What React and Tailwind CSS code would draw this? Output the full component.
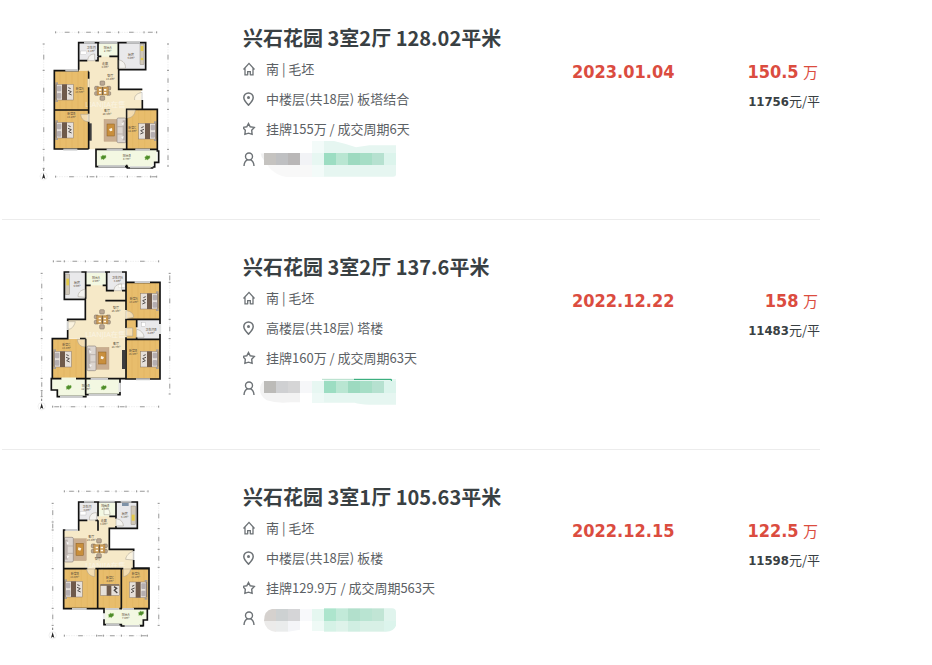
import React from "react";

/* ---------- floor plan pieces ---------- */

const WOOD = "#e8bd6c";
const TILE = "#f6e9c8";
const GREY = "#e9e9eb";
const PALE = "#f3f8e2";

function Floor({ d, fill }) {
  return <path d={d} fill={fill} />;
}

function Bed({ x, y, flip }) {
  return (
    <g transform={flip ? `translate(${x + 54} ${y}) scale(-1 1)` : `translate(${x} ${y})`}>
      <rect width="9" height="46" fill="#8d8078" />
      <rect x="4" y="0" width="50" height="47" fill="#e6e0da" stroke="#8a7a6c" strokeWidth="1.5" />
      <rect x="5" y="4" width="13" height="17" rx="3" fill="#b5aeb0" />
      <rect x="5" y="26" width="13" height="17" rx="3" fill="#b5aeb0" />
      <rect x="20" y="0" width="15" height="47" fill="#6f5a4b" />
      <path d="M38 18l10 4-8 6 9 4M39 10l7 3" stroke="#55504e" strokeWidth="3" fill="none" />
      <rect x="0" y="-6" width="8" height="6" fill="#a79c90" />
      <rect x="0" y="47" width="8" height="6" fill="#a79c90" />
    </g>
  );
}

function Sofa({ x, y, flip }) {
  return (
    <g transform={flip ? `translate(${x + 66} ${y}) scale(-1 1)` : `translate(${x} ${y})`}>
      <rect x="24" y="4" width="42" height="66" fill="#c9ad90" stroke="#b59878" />
      <rect x="0" y="0" width="27" height="74" rx="4" fill="#dcd5d0" stroke="#8f8580" strokeWidth="2" />
      <rect x="2" y="7" width="8" height="60" fill="#b9b0ab" />
      <path d="M10 26h16M10 48h16" stroke="#9c928d" strokeWidth="1.5" />
      <path d="M6 12l8 5-6 6zM7 54l8 3-6 7z" fill="#f7f5f3" />
      <rect x="35" y="18" width="22" height="36" fill="#c98f3d" stroke="#8b5f24" strokeWidth="1.5" />
      <path d="M42 30l9 3-3 7-7-2z" fill="#fbf4e4" />
    </g>
  );
}

function DiningTable({ x, y }) {
  return (
    <g transform={`translate(${x} ${y})`}>
      <g fill="#b9a793" stroke="#77695c" strokeWidth="1.5">
        <rect x="-8" y="-29" width="14" height="13" rx="3" />
        <rect x="-8" y="16" width="14" height="13" rx="3" />
        <rect x="-24" y="-13" width="12" height="11" rx="3" />
        <rect x="-24" y="3" width="12" height="11" rx="3" />
        <rect x="12" y="-13" width="12" height="11" rx="3" />
        <rect x="12" y="3" width="12" height="11" rx="3" />
      </g>
      <rect x="-17" y="-11" width="34" height="24" fill="#c99a55" stroke="#9a6e31" />
      <path d="M-11-5h7v5h-7zM4-5h7v5h-7zM-11 4h7v5h-7zM4 4h7v5h-7z" fill="#fff8ea" />
      <path d="M0-11v24" stroke="#6b5947" strokeWidth="3" />
    </g>
  );
}

function Plant({ x, y }) {
  return (
    <path
      transform={`translate(${x} ${y})`}
      d="M-8-2l5-2 1-3 4 2 5-1 1 4-1 4-4 2-2 3-3-2-5 1 1-4z"
      fill="#4f8c2a"
      stroke="#79b34f"
      strokeWidth="1"
    />
  );
}

function RoomLabel({ x, y, name, area }) {
  return (
    <g
      fill="#5b4e3b"
      fontSize="9"
      textAnchor="middle"
      fontFamily="'Noto Sans CJK SC', sans-serif"
      aria-hidden="true"
    >
      <text x={x} y={y}>{name}</text>
      {area && <text x={x} y={y + 9} fontSize="8">{area}</text>}
    </g>
  );
}

function Door({ d }) {
  return <path d={d} fill="#fffdf6" fillOpacity="0.5" stroke="#a39d90" strokeWidth="1.5" />;
}

function HWindow({ x, y, w }) {
  return (
    <g>
      <rect x={x} y={y - 3} width={w} height="6" fill="#d9dadb" />
      <path d={`M${x} ${y}h${w}`} stroke="#858788" strokeWidth="1" />
    </g>
  );
}

/* Dotted dimension line with tick marks and faded figures */
function Ruler({ vertical, at, stops }) {
  const from = stops[0];
  const to = stops[stops.length - 1];
  const line = vertical ? `M${at} ${from}V${to}` : `M${from} ${at}H${to}`;
  return (
    <g>
      <path d={line} stroke="#cfcfcf" strokeWidth="1.5" strokeDasharray="2 3" />
      {stops.map((s) => (
        <path
          key={s}
          d={vertical ? `M${at - 3} ${s}h6` : `M${s} ${at - 3}v6`}
          stroke="#8f8f8f"
          strokeWidth="3"
        />
      ))}
      {stops.slice(1).map((s, i) => {
        const mid = (s + stops[i]) / 2;
        return (
          <path
            key={s}
            d={vertical ? `M${at} ${mid - 7}v14` : `M${mid - 7} ${at}h14`}
            stroke="#b3b3b3"
            strokeWidth="4"
          />
        );
      })}
    </g>
  );
}

function Compass({ x, y }) {
  return (
    <g transform={`translate(${x} ${y})`}>
      <circle r="11" fill="#fff" stroke="#d2d2d2" />
      <path d="M0-10L5 8 0 4-5 8z" fill="#222" />
      <path d="M0-23v7" stroke="#777" strokeWidth="3" />
    </g>
  );
}

function Watermark({ x, y }) {
  return (
    <text
      x={x}
      y={y}
      fontSize="22"
      fill="#fff"
      fillOpacity="0.5"
      textAnchor="middle"
      fontFamily="'Noto Sans', 'Noto Sans CJK SC', sans-serif"
      aria-hidden="true"
    >
      LIANJIA在售
    </text>
  );
}

function PlanFrame({ box, children }) {
  return (
    <svg viewBox={box} className="h-[170px] w-[150px] shrink-0" role="img" aria-label="户型图" fill="none">
      {children}
    </svg>
  );
}

function PlanA() {
  return (
    <PlanFrame box="0 3 450 510">
      <Ruler at={37} stops={[77, 146, 205, 266, 342, 380]} />
      <Ruler at={470} stops={[77, 172, 200, 292, 362, 380]} />
      <Ruler vertical at={41} stops={[72, 151, 270, 388, 445]} />
      <Ruler vertical at={414} stops={[72, 151, 212, 268, 388, 438]} />
      <Floor d="M146 68H266V208H337V268H290V388H176V152H146z" fill={TILE} />
      <Floor d="M146 68h58v54h-58z" fill={GREY} />
      <Floor d="M204 68h61v42h-61z" fill={PALE} />
      <Floor d="M265 68h80v80h-80z" fill={GREY} />
      <Floor d="M73 152H176V387H73zM290 268H382V388H290z" fill={WOOD} />
      <Floor d="M198 390H380V430H368V440H198z" fill={PALE} />
      <path d="M90 154v232M108 154v232M126 154v232M144 154v232M162 154v232M308 270v116M326 270v116M344 270v116M362 270v116" stroke="#dcae58" strokeWidth="1" />
      <rect x="330" y="72" width="12" height="62" fill="#cfc7b8" stroke="#7a746a" />
      <rect x="332" y="78" width="8" height="15" fill="#e3ca49" />
      <circle cx="336" cy="117" r="4" fill="#e3ca49" />
      <rect x="152" y="93" width="18" height="11" fill="#fff" stroke="#aaa" />
      <rect x="177" y="310" width="8" height="52" fill="#3d3d3f" />
      <DiningTable x={218} y={212} />
      <Bed x={76} y={193} />
      <Bed x={76} y={307} />
      <Bed x={326} y={310} flip />
      <Sofa x={222} y={294} flip />
      <Plant x={220} y={412} />
      <Plant x={352} y={413} />
      <Watermark x={226} y={260} />
      <path
        d="M146 149V68H347V149H266V208H337M337 240V268H382V390H380M265 68V148M204 68V109M204 109H214M238 109H265M149 122H172M196 122H204V110M146 152H73V387H176M176 152V387M73 270H176M290 388V268H337M290 388H382V393H386V427H374V441H368M290 388H198V440H292V444H370M290 434v10"
        stroke="#121212"
        strokeWidth="5"
      />
      <path d="M176 176v26M176 281v24M176 152h24" stroke={TILE} strokeWidth="7" />
      <HWindow x={162} y={68} w={32} />
      <HWindow x={208} y={68} w={54} />
      <HWindow x={290} y={68} w={40} />
      <HWindow x={106} y={151} w={38} />
      <HWindow x={100} y={389} w={42} />
      <HWindow x={205} y={439} w={80} />
      <HWindow x={300} y={442} w={62} />
      <HWindow x={230} y={389} w={48} />
      <HWindow x={316} y={389} w={44} />
      <path d="M337 213v27" stroke="#fff" strokeWidth="8" />
      <Door d="M336 240V217C320 220 312 228 314 240" />
      <Door d="M173 122C174 108 182 102 194 102V122z" />
      <Door d="M267 145V120C280 122 288 132 286 145z" />
      <Door d="M176 283H152C154 300 166 306 176 304z" />
      <Door d="M292 270H316C314 288 302 294 292 294z" />
      <RoomLabel x={184} y={87} name="卫生间" area="4.1m²" />
      <RoomLabel x={233} y={88} name="阳台A" area="2.7m²" />
      <RoomLabel x={303} y={107} name="厨房" area="6.0m²" />
      <RoomLabel x={225} y={134} name="走廊" area="4.3m²" />
      <RoomLabel x={241} y={170} name="餐厅" area="13.8m²" />
      <RoomLabel x={149} y={209} name="卧室A" area="13.6m²" />
      <RoomLabel x={124} y={284} name="卧室B" area="14.2m²" />
      <RoomLabel x={231} y={277} name="客厅" area="20.3m²" />
      <RoomLabel x={307} y={326} name="卧室C" area="12.8m²" />
      <RoomLabel x={290} y={412} name="阳台B" area="8.7m²" />
      <Compass x={41} y={469} />
    </PlanFrame>
  );
}

function PlanB() {
  return (
    <PlanFrame box="0 0 450 510">
      <Ruler at={34} stops={[70, 103, 166, 230, 288, 386]} />
      <Ruler at={470} stops={[68, 92, 166, 265, 288, 386]} />
      <Ruler vertical at={35} stops={[70, 146, 208, 266, 385, 422, 440]} />
      <Ruler vertical at={419} stops={[70, 97, 208, 266, 385, 432]} />
      <Floor d="M167 66H288V208H320V266H288V386H167V266H113V208H167z" fill={TILE} />
      <Floor d="M103 66h64v79h-64z" fill={GREY} />
      <Floor d="M167 66h63v40h-63z" fill={PALE} />
      <Floor d="M230 66h58v56h-58z" fill={GREY} />
      <Floor d="M288 97H390V208H288zM288 267H390V387H288zM67 267H167V386H67z" fill={WOOD} />
      <Floor d="M288 209h32v57h-32z" fill={WOOD} />
      <Floor d="M320 209h70v57h-70z" fill={GREY} />
      <Floor d="M67 387H270V434H170V440H80V420H67z" fill={PALE} />
      <path d="M306 98v110M324 98v110M342 98v110M360 98v110M376 98v110M306 268v118M324 268v118M342 268v118M360 268v118M376 268v118M84 269v116M102 269v116M120 269v116M138 269v116M154 269v116" stroke="#dcae58" strokeWidth="1" />
      <rect x="107" y="72" width="12" height="62" fill="#cfc7b8" stroke="#7a746a" />
      <rect x="109" y="86" width="8" height="20" fill="#e3ca49" />
      <rect x="265" y="102" width="20" height="11" fill="#fff" stroke="#aaa" />
      <rect x="335" y="217" width="12" height="12" fill="#fff" stroke="#aaa" />
      <rect x="276" y="300" width="9" height="57" fill="#3d3d3f" />
      <DiningTable x={217} y={208} />
      <Bed x={332} y={130} flip />
      <Bed x={332} y={304} flip />
      <Bed x={70} y={304} />
      <Sofa x={171} y={288} />
      <Plant x={116} y={412} />
      <Plant x={221} y={413} />
      <Watermark x={226} y={260} />
      <path
        d="M166 148H103V66H288V97H390V387H288V66M167 66V146M167 106H182M218 106H230V66M230 106V122H252M276 122H288M166 145V208H113V214M113 240V266H67V386H64V420H82V440H170M226 152H288M288 208H390M320 208V232M320 262V268M288 268H390M167 266V434M167 386H288M150 266H167M67 386H96M138 386H167M165 434H270V387"
        stroke="#121212"
        strokeWidth="5"
      />
      <path d="M288 180v26M288 234v28" stroke={TILE} strokeWidth="7" />
      <path d="M94 386h44" stroke={PALE} strokeWidth="7" />
      <HWindow x={118} y={66} w={36} />
      <HWindow x={170} y={66} w={55} />
      <HWindow x={240} y={66} w={36} />
      <HWindow x={314} y={96} w={46} />
      <HWindow x={318} y={388} w={42} />
      <HWindow x={90} y={441} w={68} />
      <HWindow x={176} y={435} w={86} />
      <HWindow x={182} y={387} w={52} />
      <path d="M390 222v30M113 215v25M269 398v28" stroke="#e2e3e3" strokeWidth="7" />
      <Door d="M114 215H136C132 230 124 238 114 238z" />
      <Door d="M165 142V118C150 120 144 130 144 140z" />
      <Door d="M252 122C252 108 262 102 275 102V122z" />
      <Door d="M288 206V182C304 184 312 192 310 202z" />
      <Door d="M288 234H308V258H288z" />
      <Door d="M320 238C332 240 342 250 342 262H320z" />
      <Door d="M142 268C144 284 154 292 165 290V268z" />
      <RoomLabel x={141} y={101} name="厨房" area="5.6m²" />
      <RoomLabel x={198} y={87} name="阳台A" area="2.5m²" />
      <RoomLabel x={262} y={87} name="卫生间A" area="3.8m²" />
      <RoomLabel x={258} y={176} name="餐厅" area="25.4m²" />
      <RoomLabel x={311} y={150} name="卧室A" area="13.2m²" />
      <RoomLabel x={363} y={244} name="卫生间B" area="4.2m²" />
      <RoomLabel x={258} y={284} name="客厅" area="24.7m²" />
      <RoomLabel x={109} y={287} name="卧室C" area="13.0m²" />
      <RoomLabel x={309} y={305} name="卧室B" area="15.4m²" />
      <RoomLabel x={167} y={411} name="阳台B" area="12.9m²" />
      <Compass x={35} y={469} />
    </PlanFrame>
  );
}

function PlanC() {
  return (
    <PlanFrame box="0 0 450 510">
      <Ruler at={34} stops={[103, 146, 204, 258, 320, 354]} />
      <Ruler at={467} stops={[103, 200, 220, 274, 334, 352]} />
      <Ruler vertical at={68} stops={[70, 126, 150, 266, 385, 436]} />
      <Ruler vertical at={386} stops={[70, 146, 208, 262, 385, 436]} />
      <Floor d="M146 66H258V146H238V208H310V266H102V152H146z" fill={TILE} />
      <Floor d="M146 66h57v55h-57z" fill={GREY} />
      <Floor d="M204 66h54v43h-54z" fill={PALE} />
      <Floor d="M258 66h64v79h-64z" fill={GREY} />
      <Floor d="M101 266H356V386H101z" fill={WOOD} />
      <Floor d="M221 387H352V420H338V436H272V432H221z" fill={PALE} />
      <path d="M118 268v116M136 268v116M154 268v116M172 268v116M190 268v116M220 268v116M238 268v116M256 268v116M290 268v116M308 268v116M326 268v116M342 268v116" stroke="#dcae58" strokeWidth="1" />
      <rect x="303" y="78" width="14" height="56" fill="#cfc7b8" stroke="#7a746a" />
      <rect x="305" y="104" width="9" height="18" fill="#e3ca49" />
      <rect x="276" y="69" width="20" height="9" fill="#7f93a8" />
      <rect x="150" y="94" width="18" height="11" fill="#fff" stroke="#aaa" />
      <DiningTable x={208} y={205} />
      <Bed x={103} y={304} />
      <Bed x={298} y={306} flip />
      <g>
        <rect x="211" y="317" width="58" height="30" fill="#e6e0da" stroke="#877565" strokeWidth="1.5" />
        <rect x="230" y="315" width="14" height="32" fill="#6f5a4b" />
        <path d="M252 320l8 5-7 6 9 8" stroke="#494443" strokeWidth="4" />
        <rect x="211" y="312" width="57" height="5" fill="#8a7968" />
      </g>
      <Sofa x={103} y={172} />
      <Plant x={243} y={406} />
      <Plant x={333} y={400} />
      <Watermark x={226} y={264} />
      <path
        d="M146 152V66H322V145H238V208H311V214M311 240V264H357V386H352V420H340V437H328M204 66V109M238 109H258V66M258 109V116M258 138V146M146 121H172M196 121H204M204 121V152M146 150H101V386H222V434H274V438H340M101 266H172M196 266H280M304 266H357M203 266V386M274 266V386M203 386H222M268 386H276M310 386H357"
        stroke="#121212"
        strokeWidth="5"
      />
      <HWindow x={162} y={65} w={30} />
      <HWindow x={208} y={65} w={46} />
      <HWindow x={272} y={65} w={32} />
      <HWindow x={106} y={150} w={38} />
      <HWindow x={126} y={387} w={44} />
      <HWindow x={226} y={387} w={40} />
      <HWindow x={278} y={387} w={34} />
      <HWindow x={228} y={434} w={40} />
      <HWindow x={284} y={438} w={46} />
      <path d="M311 214v26M222 400v18" stroke="#eceded" strokeWidth="7" />
      <Door d="M310 240V214C296 218 288 228 287 238z" />
      <Door d="M178 120C178 106 184 98 200 98V120z" />
      <Door d="M258 116C274 118 280 128 280 138H258z" />
      <Door d="M170 267C172 282 182 288 194 290V267z" />
      <Door d="M280 290V267H302C300 280 292 288 280 290z" />
      <Door d="M222 76V104H240C240 90 232 80 222 76z" />
      <RoomLabel x={171} y={83} name="卫生间" area="3.8m²" />
      <RoomLabel x={226} y={80} name="阳台B" area="2.3m²" />
      <RoomLabel x={284} y={104} name="厨房" area="5.1m²" />
      <RoomLabel x={221} y={126} name="走廊" area="3.8m²" />
      <RoomLabel x={184} y={173} name="客厅" area="23.0m²" />
      <RoomLabel x={203} y={239} name="餐厅" />
      <RoomLabel x={134} y={284} name="卧室B" area="14.0m²" />
      <RoomLabel x={240} y={298} name="卧室C" area="8.8m²" />
      <RoomLabel x={317} y={286} name="卧室A" area="11.2m²" />
      <RoomLabel x={287} y={409} name="阳台A" area="7.0m²" />
      <Compass x={68} y={466} />
    </PlanFrame>
  );
}

/* ---------- row icons ---------- */

function Icon({ children }) {
  return (
    <svg
      viewBox="0 0 14 14"
      className="size-3.5 shrink-0 text-[#6d7276]"
      fill="none"
      stroke="currentColor"
      strokeWidth="1.3"
      aria-hidden="true"
    >
      {children}
    </svg>
  );
}

const HomeIcon = () => (
  <Icon>
    <path d="M.5 7.500L6 1.400l5.500 6.100M2 6.200v6.600h2.600M10 6.200v6.600H7.400" />
    <path d="M4.700 13.200V9.600h2.600v3.600" />
  </Icon>
);

const PinIcon = () => (
  <Icon>
    <path d="M5.500.9A4.700 4.700 0 0 0 .8 5.600c0 3 2.500 5.400 4.700 7.500 2.200-2.100 4.700-4.500 4.700-7.500A4.700 4.700 0 0 0 5.500.9z" strokeWidth="1.500" />
    <circle cx="5.500" cy="5.600" r="1.500" fill="currentColor" stroke="none" />
  </Icon>
);

const StarIcon = () => (
  <Icon>
    <path d="M5.500 1.500l1.700 3.300 4.100.6-2.600 2.900.4 4-3.600-1.100-3.600 1.100.4-4L-.300 5.400l4.100-.6z" strokeWidth="1.400" />
  </Icon>
);

const PersonIcon = () => (
  <Icon>
    <circle cx="6" cy="4.500" r="3.500" strokeWidth="1.400" />
    <path d="M1 14.500c0-4 1.600-5.700 3.500-6.800M11 14.500c0-4-1.600-5.700-3.500-6.800" strokeWidth="1.400" />
  </Icon>
);

/* ---------- pixelated agent name ---------- */

function Mosaic({ box, top, greys, soft, greens, children }) {
  return (
    <svg viewBox={box} className="h-[30px] w-[130px] shrink-0 overflow-visible" role="img" aria-label="经纪人">
      {children}
      {greys.map((c, i) => (
        <rect key={i} x={102 + i * 36} y={top} width="36" height="36" fill={c} />
      ))}
      {greens.map((c, i) => (
        <rect key={i} x={246 + i * 36} y={top} width="36" height="36" fill={c} />
      ))}
      {soft}
    </svg>
  );
}

const MosaicA = () => (
  <Mosaic
    box="108 387 390 90"
    top={414}
    greys={["#c5c3c0", "#bfc0c2", "#b9b7b7", "#f2f3f6"]}
    greens={["#e7f7f2", "#9cddc2", "#b9e6d2", "#9ddac0", "#a6dec6", "#b6e1d0", "#dcf4ec"]}
  >
    <path d="M282 378h30q35 8 66 19l40-6h80v88q0 6-8 6H282z" fill="#e6f6f1" />
    <path d="M246 378h36v108h-36z" fill="#f3fbf9" />
    <path d="M92 414h154v72h-76q-30-4-52-28z" fill="#f8f8f8" />
    <path d="M92 416h10v20q-8-8-10-20z" fill="#f1f1f1" />
  </Mosaic>
);

const MosaicB = () => (
  <Mosaic
    box="108 384 390 90"
    top={408}
    greys={["#bcbbb8", "#cfd0d2", "#d5d5d6", "#f6f7f9"]}
    greens={["#e7f7f2", "#9cddc2", "#b9e6d2", "#9ddac0", "#a6dec6", "#b6e1d0", "#dcf4ec"]}
  >
    <path d="M246 408h36v66h-36z" fill="#eef9f6" />
    <path d="M282 402h216v77h-80q-30-2-44-6h-92z" fill="#e6f6f1" />
    <path d="M102 408q-12 8-12 26t20 32q30 10 72 6h28v-64z" fill="#f3f3f3" />
    <path d="M276 403h97" stroke="#b5dfcb" strokeWidth="3" />
    <path d="M372 403h112v5" stroke="#1aa168" strokeWidth="3" fill="none" />
  </Mosaic>
);

const MosaicC = () => (
  <Mosaic
    box="108 384 390 90"
    top={402}
    greys={[]}
    greens={[]}
    soft={
      <g>
        <path d="M138 402h-12q-24 4-24 36h36z" fill="#d5d1ce" />
        <rect x="138" y="402" width="36" height="36" fill="#cdd1d2" />
        <rect x="174" y="402" width="36" height="36" fill="#d5d5d7" />
        <path d="M102 438h36v33q-32-4-36-33z" fill="#ecebea" />
        <rect x="138" y="438" width="36" height="32" fill="#eaecec" />
        <path d="M174 438h36v26l-36 6z" fill="#f4f5f8" />
        <rect x="210" y="402" width="36" height="36" fill="#f8f9fb" />
        <path d="M246 402h36v36h-36z" fill="#e5f7f0" />
        <path d="M246 438h36v30h-36z" fill="#effaf6" />
        <path d="M282 400h36v38h-36z" fill="#ade5cd" />
        <path d="M318 400h36v38h-36z" fill="#c2ead9" />
        <path d="M354 400h36v38h-36z" fill="#b2e0cc" />
        <path d="M390 400h36v38h-36z" fill="#b9e4d2" />
        <path d="M426 400h36v38h-36z" fill="#c1e5d5" />
        <path d="M462 400h24q12 0 12 12v26h-36z" fill="#e0f4ed" />
        <path d="M282 438h36v32h-36z" fill="#d5f2e6" />
        <path d="M318 438h36v32h-36z" fill="#def3ea" />
        <path d="M354 438h36v32h-36z" fill="#d0eee2" />
        <path d="M390 438h72v32h-72z" fill="#d8f0e6" />
        <path d="M462 438h36v14q-6 16-30 18h-6z" fill="#dcf4ec" />
      </g>
    }
  />
);

/* ---------- list ---------- */

const deals = [
  {
    title: "兴石花园 3室2厅 128.02平米",
    house: "南 | 毛坯",
    floor: "中楼层(共18层) 板塔结合",
    cycle: "挂牌155万 / 成交周期6天",
    date: "2023.01.04",
    total: "150.5",
    unit: "11756",
    Plan: PlanA,
    Agent: MosaicA,
  },
  {
    title: "兴石花园 3室2厅 137.6平米",
    house: "南 | 毛坯",
    floor: "高楼层(共18层) 塔楼",
    cycle: "挂牌160万 / 成交周期63天",
    date: "2022.12.22",
    total: "158",
    unit: "11483",
    Plan: PlanB,
    Agent: MosaicB,
  },
  {
    title: "兴石花园 3室1厅 105.63平米",
    house: "南 | 毛坯",
    floor: "中楼层(共18层) 板楼",
    cycle: "挂牌129.9万 / 成交周期563天",
    date: "2022.12.15",
    total: "122.5",
    unit: "11598",
    Plan: PlanC,
    Agent: MosaicC,
  },
];

function InfoLine({ icon, children }) {
  return (
    <div className="flex h-[30px] items-center gap-[9px]">
      {icon}
      {children}
    </div>
  );
}

function DealRow({ deal }) {
  const { Plan, Agent } = deal;
  return (
    <li className="flex border-b border-[#ececec] pt-[30px] pb-[29px] pl-7 first:pt-[21px] first:pb-7 last:border-b-0 last:pb-0">
      <Plan />
      <div className="ml-[63px] grid min-w-0 flex-1 grid-cols-[minmax(0,1fr)_104px_144px]">
        <div className="text-[13px] whitespace-nowrap text-[#5c6165]">
          <h2 className="h-[33px] text-xl leading-[33px] font-bold text-[#394043]">
            <a href="#">{deal.title}</a>
          </h2>
          <InfoLine icon={<HomeIcon />}>{deal.house}</InfoLine>
          <InfoLine icon={<PinIcon />}>{deal.floor}</InfoLine>
          <InfoLine icon={<StarIcon />}>{deal.cycle}</InfoLine>
          <InfoLine icon={<PersonIcon />}>
            <Agent />
          </InfoLine>
        </div>
        <div className="pt-9 font-['DejaVu_Sans_Condensed','DejaVu_Sans',sans-serif] text-lg leading-[30px] font-bold text-[#db4c3f]">
          {deal.date}
        </div>
        <div className="pt-9 text-right">
          <div className="pr-0.5 text-[15px] leading-[30px] text-[#db4c3f]">
            <span className="mr-px font-['DejaVu_Sans_Condensed','DejaVu_Sans',sans-serif] text-lg leading-[30px] font-bold">{deal.total}</span> 万
          </div>
          <div className="text-[13px] leading-7 text-[#394043]">
            <span className="font-['DejaVu_Sans_Condensed','DejaVu_Sans',sans-serif] font-bold">{deal.unit}</span>元/平
          </div>
        </div>
      </div>
    </li>
  );
}

export default function App() {
  return (
    <main className="min-h-screen bg-white pr-28 pl-0.5 font-['Noto_Sans_CJK_SC',sans-serif]">
      <ul>
        {deals.map((deal) => (
          <DealRow key={deal.title} deal={deal} />
        ))}
      </ul>
    </main>
  );
}
